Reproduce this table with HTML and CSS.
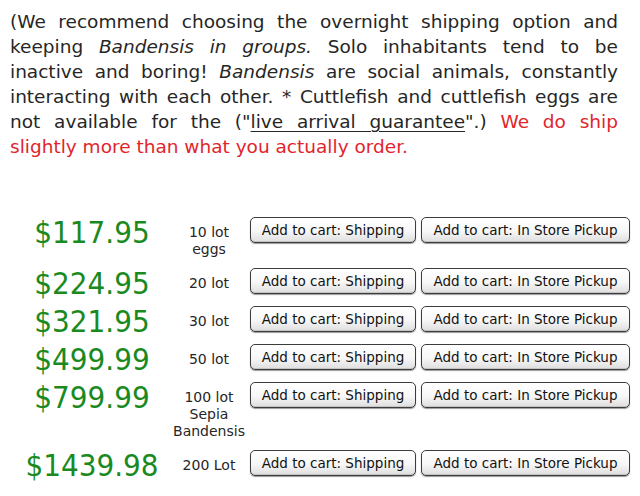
FILE: index.html
```html
<!DOCTYPE html>
<html>
<head>
<meta charset="utf-8">
<link rel="stylesheet" href="styles.css">
</head>
<body>
<p class="intro">(We recommend choosing the overnight shipping option and keeping <em>Bandensis in groups.</em> Solo inhabitants tend to be inactive and boring! <em>Bandensis</em> are social animals, constantly interacting with each other. * Cuttlefish and cuttlefish eggs are not available for the ("<u>live arrival guarantee</u>".) <span class="red">We do ship slightly more than what you actually order.</span></p>

<div class="products">
  <div class="row">
    <div class="price">$117.95</div>
    <div class="lot"><span>10 lot</span><span>eggs</span></div>
    <div class="btns"><button class="btn ship">Add to cart: Shipping</button><button class="btn pick">Add to cart: In Store Pickup</button></div>
  </div>
  <div class="row">
    <div class="price">$224.95</div>
    <div class="lot"><span>20 lot</span></div>
    <div class="btns"><button class="btn ship">Add to cart: Shipping</button><button class="btn pick">Add to cart: In Store Pickup</button></div>
  </div>
  <div class="row">
    <div class="price">$321.95</div>
    <div class="lot"><span>30 lot</span></div>
    <div class="btns"><button class="btn ship">Add to cart: Shipping</button><button class="btn pick">Add to cart: In Store Pickup</button></div>
  </div>
  <div class="row">
    <div class="price">$499.99</div>
    <div class="lot"><span>50 lot</span></div>
    <div class="btns"><button class="btn ship">Add to cart: Shipping</button><button class="btn pick">Add to cart: In Store Pickup</button></div>
  </div>
  <div class="row">
    <div class="price">$799.99</div>
    <div class="lot"><span>100 lot</span><span>Sepia</span><span>Bandensis</span></div>
    <div class="btns"><button class="btn ship">Add to cart: Shipping</button><button class="btn pick">Add to cart: In Store Pickup</button></div>
  </div>
  <div class="row">
    <div class="price">$1439.98</div>
    <div class="lot"><span>200 Lot</span></div>
    <div class="btns"><button class="btn ship">Add to cart: Shipping</button><button class="btn pick">Add to cart: In Store Pickup</button></div>
  </div>
</div>
</body>
</html>
```

FILE: styles.css
```css
html, body {
  margin: 0;
  padding: 0;
  background: #ffffff;
}
body {
  font-family: "DejaVu Sans", sans-serif;
  color: #262626;
}
.intro {
  margin: 0;
  padding: 9px 22px 0 10px;
  font-size: 18.5px;
  line-height: 25px;
  text-align: justify;
}
.intro em {
  font-style: italic;
}
.intro u {
  text-decoration: underline;
  text-underline-offset: 3px;
}
.red {
  color: #e0252b;
}
.products {
  margin-top: 55px;
  display: flex;
  flex-direction: column;
}
.row {
  display: grid;
  grid-template-columns: 172px 62px auto;
  align-items: start;
  padding-left: 6px;
}
.price {
  text-align: center;
  font-family: "DejaVu Sans Condensed", "DejaVu Sans", sans-serif;
  font-stretch: semi-condensed;
  font-size: 31px;
  line-height: 36px;
  padding-bottom: 2px;
  color: #1a8a1f;
}
.lot {
  display: flex;
  flex-direction: column;
  align-items: center;
  font-size: 14px;
  line-height: 17px;
  padding: 10px 0 7px;
  color: #262626;
  white-space: nowrap;
}
.btns {
  display: flex;
  gap: 5px;
  padding: 3px 0 0 10px;
}
.btn {
  height: 26px;
  padding: 0;
  font-family: "DejaVu Sans", sans-serif;
  font-size: 13.5px;
  color: #111;
  border: 1px solid #3c3c3c;
  border-radius: 5px;
  background: linear-gradient(#ffffff 0%, #f7f7f7 55%, #dedede 100%);
  box-shadow: 0 1px 1px rgba(0,0,0,0.4), inset 0 -1px 0 #c4c4c4;
}
.ship {
  width: 166px;
}
.pick {
  width: 209px;
}
```
